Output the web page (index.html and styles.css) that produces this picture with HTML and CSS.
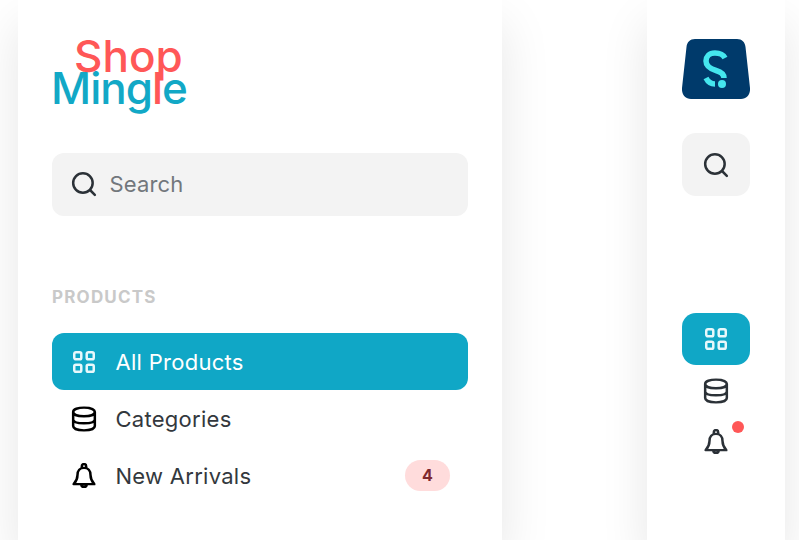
FILE: index.html
```html
<!DOCTYPE html>
<html lang="en">
<head>
    <meta charset="UTF-8">
    <meta name="viewport" content="width=device-width, initial-scale=1.0">
    <title>ShopMingle</title>
    <link rel="stylesheet" href="styles.css">
</head>
<body>
<div class="sidebar">
    <div class="logo">
        <div class="logo-shop">Shop</div>
        <div class="logo-mingle">Ming<span class="logo-l">l</span>e</div>
    </div>
    <div class="search">
        <svg class="icon" viewBox="0 0 24 24"><circle cx="11" cy="11" r="9"/><path d="M18 18l4 4"/></svg>
        <span>Search</span>
    </div>
    <div class="section-label">PRODUCTS</div>
    <a class="nav-item active">
        <svg class="icon" viewBox="0 0 24 24"><rect x="3" y="3" width="6.500" height="6.500" rx="1.500"/><rect x="14.500" y="3" width="6.500" height="6.500" rx="1.500"/><rect x="3" y="14.500" width="6.500" height="6.500" rx="1.500"/><rect x="14.500" y="14.500" width="6.500" height="6.500" rx="1.500"/></svg>
        <span>All Products</span>
    </a>
    <a class="nav-item">
        <svg class="icon black" viewBox="0 0 24 24"><path d="M2 5.500C2 3 6.500 1.500 12 1.500S22 3 22 5.500v13c0 2.500-4.500 4-10 4s-10-1.500-10-4zM2 5.500C2 8 6.500 9.500 12 9.500S22 8 22 5.500M2 12.500C2 15 6.500 16 12 16s10-1 10-3.500"/></svg>
        <span>Categories</span>
    </a>
    <a class="nav-item">
        <svg class="icon black" viewBox="0 0 24 24"><path d="M12 4.500c-3.800 0-6 2.700-6 6.500 0 4-1.200 5.800-3.500 8.500h19c-2.300-2.700-3.500-4.500-3.500-8.500 0-3.800-2.200-6.500-6-6.500zM10 4.500V3a2 2 0 0 1 4 0v1.500M9.500 19.500c0 3.300 5 3.300 5 0"/></svg>
        <span>New Arrivals</span>
        <span class="badge">4</span>
    </a>
</div>

<div class="mini">
    <div class="mini-logo">
        <svg viewBox="0 0 68 60"><path class="mini-logo-bg" d="M13 0H55C60 0 63 3 63.500 8L68 49C68.500 55 65 60 59 60H9C3 60-.5 55 0 49L4.500 8C5 3 8 0 13 0Z"/><path class="mini-logo-s" d="M43 19C41 15 37 14 33 14 27 14 24 18 24 22 24 28 29 30 34 31.500 39 33 42 35 42 39M24 39C26 43 29 45 33 45"/><circle class="mini-logo-dot" cx="40" cy="45" r="4"/></svg>
    </div>
    <div class="mini-search">
        <svg class="icon" viewBox="0 0 24 24"><circle cx="11" cy="11" r="9"/><path d="M18 18l4 4"/></svg>
    </div>
    <div class="mini-item active">
        <svg class="icon" viewBox="0 0 24 24"><rect x="3" y="3" width="6.500" height="6.500" rx="1.500"/><rect x="14.500" y="3" width="6.500" height="6.500" rx="1.500"/><rect x="3" y="14.500" width="6.500" height="6.500" rx="1.500"/><rect x="14.500" y="14.500" width="6.500" height="6.500" rx="1.500"/></svg>
    </div>
    <div class="mini-item">
        <svg class="icon" viewBox="0 0 24 24"><path d="M2 5.500C2 3 6.500 1.500 12 1.500S22 3 22 5.500v13c0 2.500-4.500 4-10 4s-10-1.500-10-4zM2 5.500C2 8 6.500 9.500 12 9.500S22 8 22 5.500M2 12.500C2 15 6.500 16 12 16s10-1 10-3.500"/></svg>
    </div>
    <div class="mini-item bell">
        <svg class="icon" viewBox="0 0 24 24"><path d="M12 4.500c-3.800 0-6 2.700-6 6.500 0 4-1.200 5.800-3.500 8.500h19c-2.300-2.700-3.500-4.500-3.500-8.500 0-3.800-2.200-6.500-6-6.500zM10 4.500V3a2 2 0 0 1 4 0v1.500M9.500 19.500c0 3.300 5 3.300 5 0"/></svg>
        <span class="dot"></span>
    </div>
</div>
</body>
</html>
```

FILE: styles.css
```css
body {
    margin: 0;
    height: 540px;
    overflow: hidden;
    display: flex;
    background: #fff;
    font-family: Inter, "Liberation Sans", sans-serif;
    color: #33383d;
}

.sidebar {
    width: 415.5px;
    height: 540px;
    margin-left: 18px;
    padding: 0 34.5px 0 34px;
    flex-shrink: 0;
    background: #fff;
    box-shadow: 0 24px 48px rgba(0, 0, 0, 0.1);
}

.mini {
    width: 68px;
    height: 501px;
    margin-left: 145px;
    padding: 39px 35px 0 34.5px;
    flex-shrink: 0;
    background: #fff;
    box-shadow: 0 24px 48px rgba(0, 0, 0, 0.1);
}

.icon {
    width: 26px;
    height: 26px;
    fill: none;
    stroke: #2b3137;
    stroke-width: 2.3;
    stroke-linecap: round;
    stroke-linejoin: round;
    flex-shrink: 0;
}

.icon.black {
    stroke: #000;
}

.logo {
    height: 153px;
    padding-top: 40px;
    box-sizing: border-box;
    font-weight: 500;
    font-size: 44px;
    line-height: 32px;
}

.logo-shop {
    margin-left: 22px;
    color: #ff5757;
    position: relative;
    z-index: 1;
}

.logo-mingle {
    margin-left: -1px;
    color: #12a8c6;
    letter-spacing: -1px;
}

.logo-l {
    color: #ff5757;
}

.search {
    height: 62px;
    padding-bottom: 1px;
    display: flex;
    align-items: center;
    gap: 12.5px;
    padding-left: 19px;
    background: #f3f3f3;
    border-radius: 12px;
    font-size: 22px;
    letter-spacing: 0.15px;
    color: #72777c;
}

.section-label {
    margin-top: 72px;
    margin-bottom: 27px;
    height: 18px;
    font-size: 17px;
    line-height: 18px;
    font-weight: 700;
    letter-spacing: 1.2px;
    color: #c9c9c9;
}

.nav-item {
    height: 57px;
    display: flex;
    align-items: center;
    gap: 18.5px;
    padding: 0 17.5px 0 19px;
    border-radius: 12px;
    font-size: 22px;
    letter-spacing: 0.28px;
}

.nav-item.active {
    background: #10a7c6;
    color: #fff;
}

.nav-item.active .icon,
.mini-item.active .icon {
    stroke: #e8f8fb;
}

.badge {
    margin-left: auto;
    width: 45px;
    height: 31px;
    border-radius: 16px;
    background: #ffdcdc;
    color: #7f2a2f;
    font-size: 16px;
    font-weight: 700;
    line-height: 31px;
    text-align: center;
}

.mini-logo {
    height: 60px;
}

.mini-logo svg {
    display: block;
    width: 68px;
    height: 60px;
}

.mini-logo-bg {
    fill: #003a6b;
}

.mini-logo-s {
    fill: none;
    stroke: #45e6ee;
    stroke-width: 5.5;
}

.mini-logo-dot {
    fill: #45e6ee;
}

.mini-search {
    height: 63px;
    margin-top: 34px;
    margin-bottom: 117px;
    display: flex;
    align-items: center;
    justify-content: center;
    background: #f3f3f3;
    border-radius: 14px;
}

.mini-item {
    height: 51px;
    display: flex;
    align-items: center;
    justify-content: center;
    border-radius: 14px;
    position: relative;
}

.mini-item.active {
    height: 52px;
    background: #10a7c6;
}

.dot {
    position: absolute;
    top: 5px;
    left: 50px;
    width: 12px;
    height: 12px;
    border-radius: 50%;
    background: #ff5757;
}
```
